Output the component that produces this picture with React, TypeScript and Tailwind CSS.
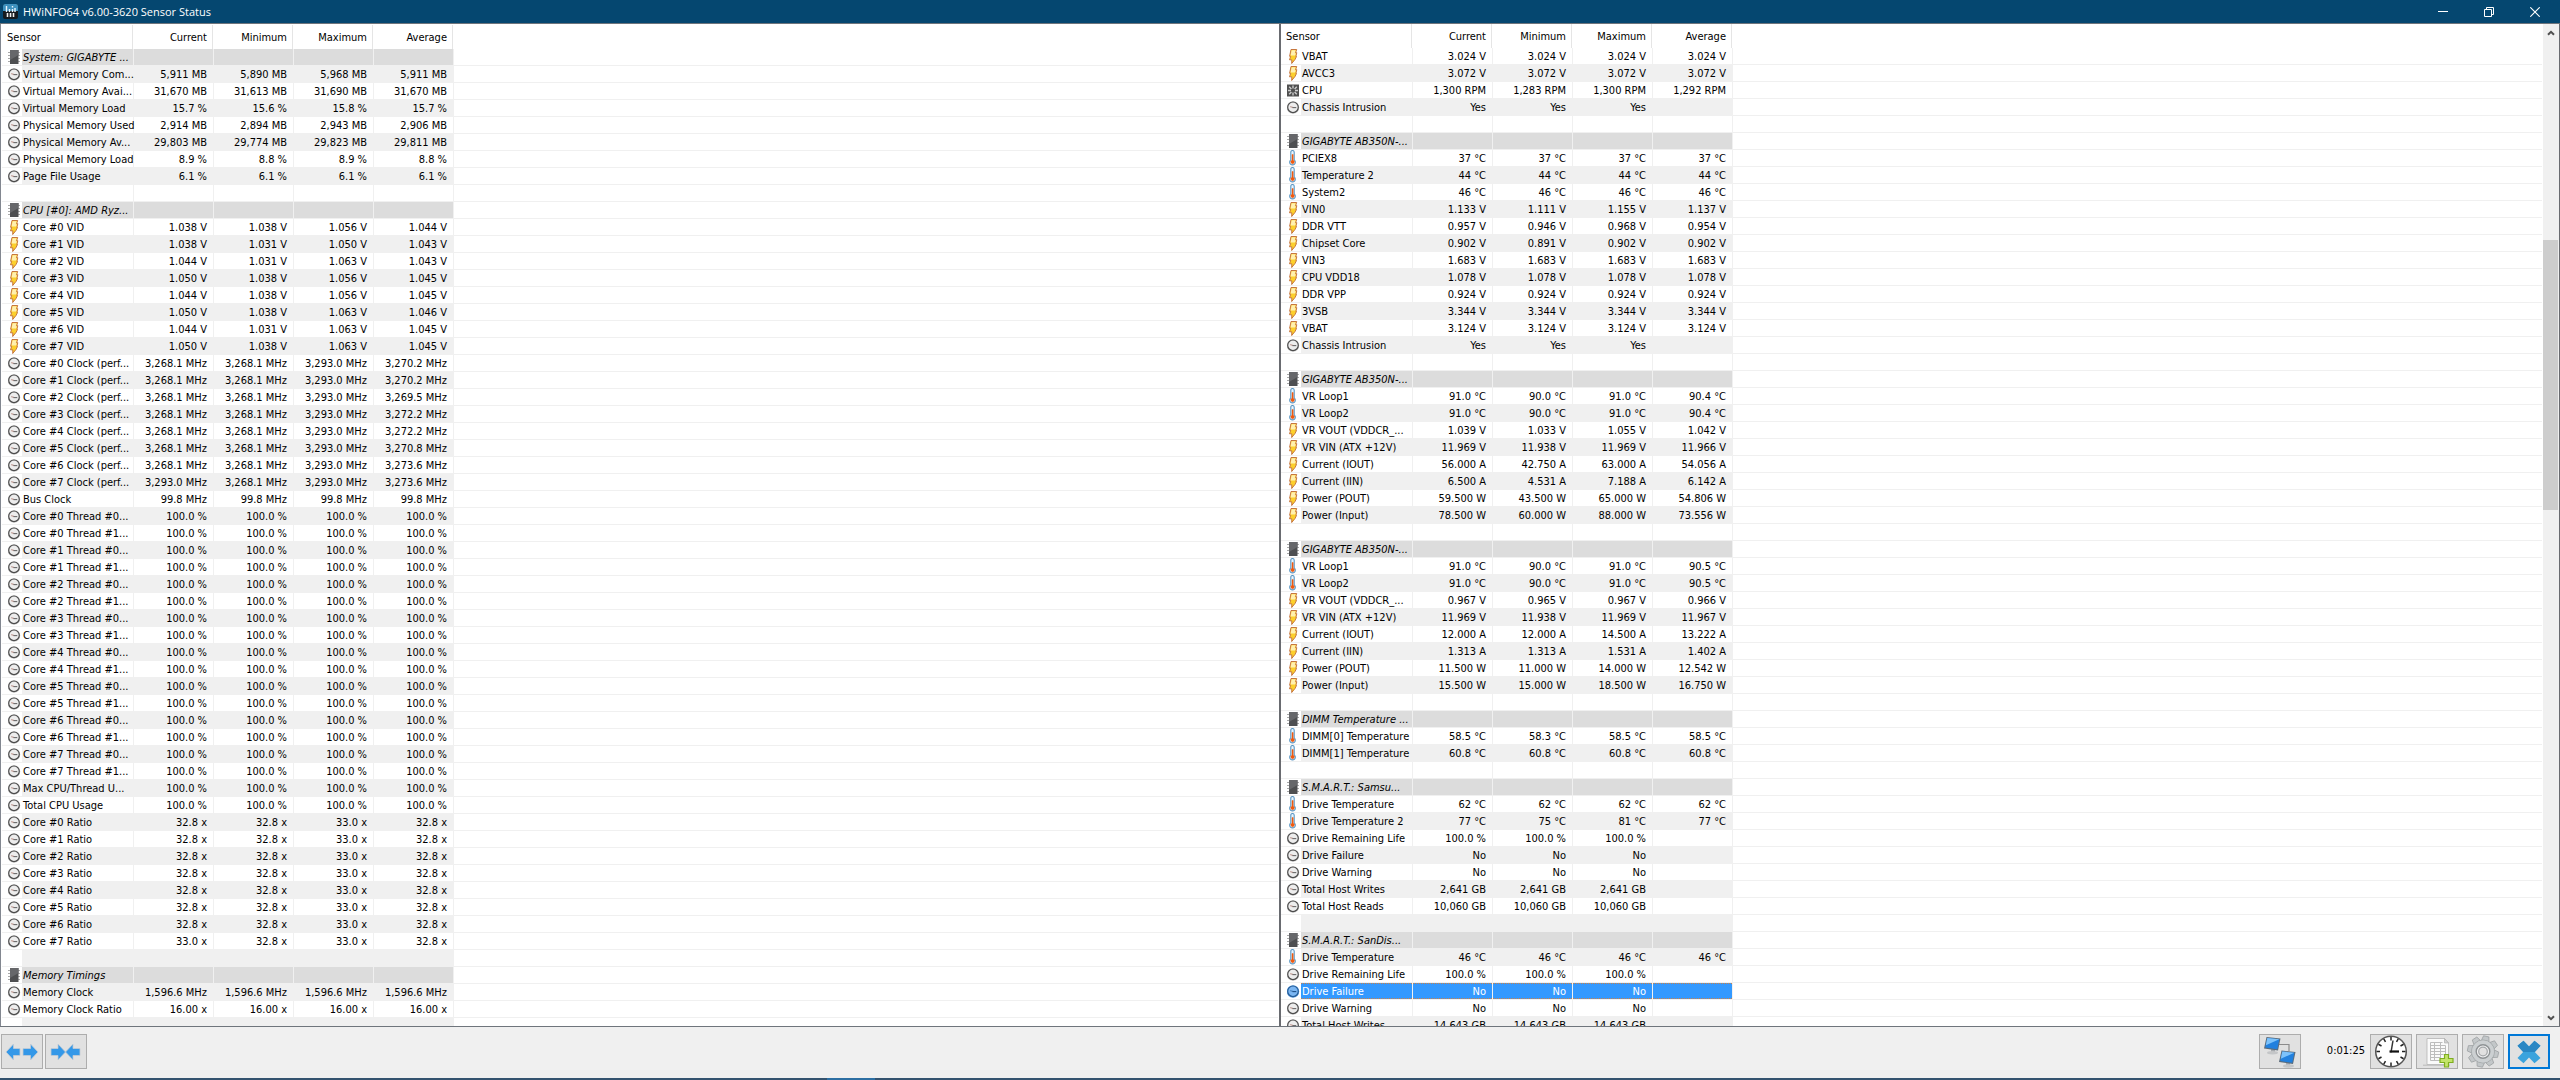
type IconKind = 'chip' | 'gauge' | 'volt' | 'temp' | 'fan';

interface Row {
  icon?: IconKind;
  label: string;
  values: string[];
  group?: boolean;
  selected?: boolean;
}

const same = (value: string, times = 4) => Array<string>(times).fill(value);
const row = (icon: IconKind, label: string, ...values: string[]): Row => ({ icon, label, values });
const group = (label: string): Row => ({ icon: 'chip', label, values: [], group: true });
const blank: Row = { label: '', values: [] };

const coreVids = [
  ['1.038 V', '1.038 V', '1.056 V', '1.044 V'],
  ['1.038 V', '1.031 V', '1.050 V', '1.043 V'],
  ['1.044 V', '1.031 V', '1.063 V', '1.043 V'],
  ['1.050 V', '1.038 V', '1.056 V', '1.045 V'],
  ['1.044 V', '1.038 V', '1.056 V', '1.045 V'],
  ['1.050 V', '1.038 V', '1.063 V', '1.046 V'],
  ['1.044 V', '1.031 V', '1.063 V', '1.045 V'],
  ['1.050 V', '1.038 V', '1.063 V', '1.045 V'],
];

const clockAverages = ['3,270.2', '3,270.2', '3,269.5', '3,272.2', '3,272.2', '3,270.8', '3,273.6', '3,273.6'];

const leftRows: Row[] = [
  group('System: GIGABYTE ...'),
  row('gauge', 'Virtual Memory Com...', '5,911 MB', '5,890 MB', '5,968 MB', '5,911 MB'),
  row('gauge', 'Virtual Memory Avai...', '31,670 MB', '31,613 MB', '31,690 MB', '31,670 MB'),
  row('gauge', 'Virtual Memory Load', '15.7 %', '15.6 %', '15.8 %', '15.7 %'),
  row('gauge', 'Physical Memory Used', '2,914 MB', '2,894 MB', '2,943 MB', '2,906 MB'),
  row('gauge', 'Physical Memory Av...', '29,803 MB', '29,774 MB', '29,823 MB', '29,811 MB'),
  row('gauge', 'Physical Memory Load', '8.9 %', '8.8 %', '8.9 %', '8.8 %'),
  row('gauge', 'Page File Usage', ...same('6.1 %')),
  blank,
  group('CPU [#0]: AMD Ryz...'),
  ...coreVids.map((values, i) => row('volt', `Core #${i} VID`, ...values)),
  ...clockAverages.map((avg, i) =>
    row(
      'gauge',
      `Core #${i} Clock (perf...`,
      i === 7 ? '3,293.0 MHz' : '3,268.1 MHz',
      '3,268.1 MHz',
      '3,293.0 MHz',
      `${avg} MHz`
    )
  ),
  row('gauge', 'Bus Clock', ...same('99.8 MHz')),
  ...Array.from({ length: 16 }, (_, i) =>
    row('gauge', `Core #${Math.floor(i / 2)} Thread #${i % 2}...`, ...same('100.0 %'))
  ),
  row('gauge', 'Max CPU/Thread U...', ...same('100.0 %')),
  row('gauge', 'Total CPU Usage', ...same('100.0 %')),
  ...Array.from({ length: 8 }, (_, i) =>
    row('gauge', `Core #${i} Ratio`, i === 7 ? '33.0 x' : '32.8 x', '32.8 x', '33.0 x', '32.8 x')
  ),
  blank,
  group('Memory Timings'),
  row('gauge', 'Memory Clock', ...same('1,596.6 MHz')),
  row('gauge', 'Memory Clock Ratio', ...same('16.00 x')),
  blank,
];

const rightRows: Row[] = [
  row('volt', 'VBAT', ...same('3.024 V')),
  row('volt', 'AVCC3', ...same('3.072 V')),
  row('fan', 'CPU', '1,300 RPM', '1,283 RPM', '1,300 RPM', '1,292 RPM'),
  row('gauge', 'Chassis Intrusion', ...same('Yes', 3)),
  blank,
  group('GIGABYTE AB350N-...'),
  row('temp', 'PCIEX8', ...same('37 °C')),
  row('temp', 'Temperature 2', ...same('44 °C')),
  row('temp', 'System2', ...same('46 °C')),
  row('volt', 'VIN0', '1.133 V', '1.111 V', '1.155 V', '1.137 V'),
  row('volt', 'DDR VTT', '0.957 V', '0.946 V', '0.968 V', '0.954 V'),
  row('volt', 'Chipset Core', '0.902 V', '0.891 V', '0.902 V', '0.902 V'),
  row('volt', 'VIN3', ...same('1.683 V')),
  row('volt', 'CPU VDD18', ...same('1.078 V')),
  row('volt', 'DDR VPP', ...same('0.924 V')),
  row('volt', '3VSB', ...same('3.344 V')),
  row('volt', 'VBAT', ...same('3.124 V')),
  row('gauge', 'Chassis Intrusion', ...same('Yes', 3)),
  blank,
  group('GIGABYTE AB350N-...'),
  row('temp', 'VR Loop1', '91.0 °C', '90.0 °C', '91.0 °C', '90.4 °C'),
  row('temp', 'VR Loop2', '91.0 °C', '90.0 °C', '91.0 °C', '90.4 °C'),
  row('volt', 'VR VOUT (VDDCR_...', '1.039 V', '1.033 V', '1.055 V', '1.042 V'),
  row('volt', 'VR VIN (ATX +12V)', '11.969 V', '11.938 V', '11.969 V', '11.966 V'),
  row('volt', 'Current (IOUT)', '56.000 A', '42.750 A', '63.000 A', '54.056 A'),
  row('volt', 'Current (IIN)', '6.500 A', '4.531 A', '7.188 A', '6.142 A'),
  row('volt', 'Power (POUT)', '59.500 W', '43.500 W', '65.000 W', '54.806 W'),
  row('volt', 'Power (Input)', '78.500 W', '60.000 W', '88.000 W', '73.556 W'),
  blank,
  group('GIGABYTE AB350N-...'),
  row('temp', 'VR Loop1', '91.0 °C', '90.0 °C', '91.0 °C', '90.5 °C'),
  row('temp', 'VR Loop2', '91.0 °C', '90.0 °C', '91.0 °C', '90.5 °C'),
  row('volt', 'VR VOUT (VDDCR_...', '0.967 V', '0.965 V', '0.967 V', '0.966 V'),
  row('volt', 'VR VIN (ATX +12V)', '11.969 V', '11.938 V', '11.969 V', '11.967 V'),
  row('volt', 'Current (IOUT)', '12.000 A', '12.000 A', '14.500 A', '13.222 A'),
  row('volt', 'Current (IIN)', '1.313 A', '1.313 A', '1.531 A', '1.402 A'),
  row('volt', 'Power (POUT)', '11.500 W', '11.000 W', '14.000 W', '12.542 W'),
  row('volt', 'Power (Input)', '15.500 W', '15.000 W', '18.500 W', '16.750 W'),
  blank,
  group('DIMM Temperature ...'),
  row('temp', 'DIMM[0] Temperature', '58.5 °C', '58.3 °C', '58.5 °C', '58.5 °C'),
  row('temp', 'DIMM[1] Temperature', ...same('60.8 °C')),
  blank,
  group('S.M.A.R.T.: Samsu...'),
  row('temp', 'Drive Temperature', ...same('62 °C')),
  row('temp', 'Drive Temperature 2', '77 °C', '75 °C', '81 °C', '77 °C'),
  row('gauge', 'Drive Remaining Life', ...same('100.0 %', 3)),
  row('gauge', 'Drive Failure', ...same('No', 3)),
  row('gauge', 'Drive Warning', ...same('No', 3)),
  row('gauge', 'Total Host Writes', ...same('2,641 GB', 3)),
  row('gauge', 'Total Host Reads', ...same('10,060 GB', 3)),
  blank,
  group('S.M.A.R.T.: SanDis...'),
  row('temp', 'Drive Temperature', ...same('46 °C')),
  row('gauge', 'Drive Remaining Life', ...same('100.0 %', 3)),
  { ...row('gauge', 'Drive Failure', ...same('No', 3)), selected: true },
  row('gauge', 'Drive Warning', ...same('No', 3)),
  row('gauge', 'Total Host Writes', ...same('14,643 GB', 3)),
];

function SensorIcon({ kind, selected }: { kind: IconKind; selected?: boolean }) {
  return (
    <svg width="13" height="16" viewBox="0 0 13 16" className="block" aria-hidden>
      {kind === 'chip' && (
        <>
          <path d="M0 3.5h12M0 6.5h12M0 9.5h12M0 12.5h12" stroke="#a9a9a9" />
          <path d="M2 1h8.500v14H2z" fill="#4e4f51" />
          <path d="M2 1h8.500v5L2 11z" fill="#66676a" />
        </>
      )}
      {kind === 'gauge' && (
        <>
          <circle cx="6" cy="8.5" r="6.2" fill={selected ? '#5f9fe0' : '#c9c9c9'} />
          <circle
            cx="6"
            cy="8.3"
            r="5.3"
            fill={selected ? '#7bb6f2' : '#ededed'}
            stroke={selected ? '#245c97' : '#4c4c4c'}
            strokeWidth="1.2"
          />
          <path d="M3.200 7.700 6 8.400" stroke={selected ? '#3e78b5' : '#b8887f'} />
          <path d="M5.500 8.600h3.800" stroke={selected ? '#1d4f86' : '#6a6a6a'} strokeWidth="1.1" />
        </>
      )}
      {kind === 'volt' && (
        <>
          <path
            d="M4 1.500h5.700L8.600 4.700h1.200L8.900 8.500h.6L8 11.500l-3.300 4 .1-3.700H2.500L3.700 8.300H2.600z"
            fill="#fcd02c"
            stroke="#bf6a35"
            strokeWidth="0.9"
            strokeLinejoin="round"
          />
          <path d="M4.600 2.200h4L7.700 5.200h1.100L8.200 7.500H3.600z" fill="#fff0b0" />
        </>
      )}
      {kind === 'temp' && (
        <>
          <path
            d="M3.800 2.200a1.700 1.700 0 0 1 3.400 0v7.700a2.800 2.800 0 1 1-3.400 0z"
            fill="#e9f5fe"
            stroke="#5a96c3"
            strokeWidth="1.1"
          />
          <path d="M5 4.500h1.200v5.800a1.700 1.700 0 1 1-1.200 0z" fill="#f05a10" stroke="#f05a10" strokeWidth="0.400" />
        </>
      )}
      {kind === 'fan' && (
        <>
          <path d="M0 2.500h12v12H0z" fill="#505050" />
          <path
            d="M6 3.500v3M6 10.500v3M1 8.500h3M8 8.500h3M2.200 4.700l2.200 2.200M7.600 10.100l2.200 2.200M9.800 4.700 7.600 6.900M4.400 10.100l-2.200 2.200"
            stroke="#cdcdcd"
            strokeWidth="1.4"
          />
        </>
      )}
    </svg>
  );
}

function rowFill(r: Row, index: number) {
  if (r.selected) return 'bg-[#3399ff] text-white';
  if (r.group) return 'bg-[#dcdcdc]';
  return index % 2 ? 'bg-[#f0f0f0]' : '';
}

function SensorTable({ rows }: { rows: Row[] }) {
  return (
    <table className="w-full table-fixed border-separate border-spacing-0 text-[11px] text-black">
      <colgroup>
        <col className="w-5" />
        <col className="w-28" />
        <col className="w-20" />
        <col className="w-20" />
        <col className="w-20" />
        <col className="w-20" />
        <col />
      </colgroup>
      <thead>
        <tr>
          <th colSpan={2} className="p-0 text-left font-normal">
            <div className="mr-px h-6 border-r border-[#e5e5e5] pl-[5px] leading-[26px]">Sensor</div>
          </th>
          {['Current', 'Minimum', 'Maximum', 'Average'].map((title) => (
            <th key={title} className="p-0 text-right font-normal">
              <div className="mr-px h-6 border-r border-[#e5e5e5] pr-[5px] leading-[26px]">{title}</div>
            </th>
          ))}
          <th className="p-0" />
        </tr>
      </thead>
      <tbody>
        {rows.map((r, i) => {
          const fill = rowFill(r, i);
          const focus = r.selected ? 'border-y border-dotted border-[#c9814a] leading-4' : 'leading-[18px]';
          return (
            <tr key={i}>
              <td className="border-b border-[#f0f0f0] p-0 pl-1.5">
                {r.icon && <SensorIcon kind={r.icon} selected={r.selected} />}
              </td>
              <td className={`border-r border-b border-[#f0f0f0] p-0 whitespace-nowrap ${fill}`}>
                <div className={`h-4 pl-px ${focus} ${r.group ? 'italic' : ''}`}>{r.label}</div>
              </td>
              {[0, 1, 2, 3].map((c) => (
                <td key={c} className={`border-r border-b border-[#f0f0f0] p-0 text-right whitespace-nowrap ${fill}`}>
                  <div className={`h-4 pr-1.5 ${focus}`}>{r.values[c]}</div>
                </td>
              ))}
              <td className="border-b border-[#f0f0f0] p-0" />
            </tr>
          );
        })}
      </tbody>
    </table>
  );
}

function TitleBar() {
  return (
    <header className="flex h-[23px] shrink-0 items-center bg-[#054770] pr-0.5 pl-[3px] text-white">
      <svg width="15" height="15" viewBox="0 0 15 15" aria-hidden>
        <rect width="15" height="15" rx="2" fill="#15191d" />
        <path d="M0 2a2 2 0 0 1 2-2h11a2 2 0 0 1 2 2v5H0z" fill="#3d91bf" />
        <path d="M3.5 2v6M6.5 5v3M9.5 2v1.4M9.5 5v3M12 4v4" stroke="#e8f6ff" strokeWidth="1.4" />
        <path d="M4.5 9v4M7.5 9v4M10.5 9v4" stroke="#f2f2f2" strokeWidth="1.6" />
      </svg>
      <h1 className="ml-[5px] pt-px font-['Open_Sans',sans-serif] text-[11px]">HWiNFO64 v6.00-3620 Sensor Status</h1>
      <div className="ml-auto flex h-full">
        <button type="button" aria-label="Minimize" className="flex w-[46px] items-center justify-center">
          <svg width="10" height="10" viewBox="0 0 10 10">
            <path d="M0 4.5h10" stroke="#fff" />
          </svg>
        </button>
        <button type="button" aria-label="Restore" className="flex w-[46px] items-center justify-center">
          <svg width="10" height="10" viewBox="0 0 10 10" fill="none" stroke="#fff">
            <path d="M.5 2.5h7v7h-7zM2.5 2.5v-2h7v7h-2" />
          </svg>
        </button>
        <button type="button" aria-label="Close" className="flex w-[46px] items-center justify-center">
          <svg width="10" height="10" viewBox="0 0 10 10">
            <path d="M.3.3l9.4 9.4M9.7.3.3 9.7" stroke="#fff" strokeWidth="1.1" />
          </svg>
        </button>
      </div>
    </header>
  );
}

function ScrollBar() {
  return (
    <div className="flex w-4 shrink-0 flex-col bg-[#f0f0f0]">
      <button type="button" aria-label="Scroll up" className="flex h-[17px] items-center justify-center">
        <svg width="8" height="6" viewBox="0 0 8 6">
          <path d="M1 4.8 4 1.8l3 3" fill="none" stroke="#505050" strokeWidth="2" />
        </svg>
      </button>
      <div className="flex-[199]" />
      <div className="mr-px flex-[270] bg-[#cdcdcd]" />
      <div className="flex-[499]" />
      <button type="button" aria-label="Scroll down" className="flex h-[17px] items-center justify-center">
        <svg width="8" height="6" viewBox="0 0 8 6">
          <path d="M1 1.2l3 3 3-3" fill="none" stroke="#505050" strokeWidth="2" />
        </svg>
      </button>
    </div>
  );
}

function ToolButton({ label, active, children }: { label: string; active?: boolean; children: React.ReactNode }) {
  return (
    <button
      type="button"
      aria-label={label}
      className={`flex h-[35px] w-[42px] items-center justify-center bg-[#e1e1e1] ${
        active ? 'border-2 border-[#0078d7]' : 'border border-[#adadad]'
      }`}
    >
      {children}
    </button>
  );
}

function BottomBar() {
  return (
    <footer className="flex h-[51px] shrink-0 bg-[#f0f0f0] pt-[7px] pr-2.5 pl-px">
      <div className="flex gap-0.5">
        <ToolButton label="Expand columns">
          <svg width="34" height="20" viewBox="0 0 34 20" fill="#3498e8" stroke="#c3ccd4" strokeWidth="0.8">
            <path d="M1 10 8.500 2v4.500H15v7H8.500V18z" />
            <path d="M33 10 25.500 2v4.500H18v7h7.500V18z" />
          </svg>
        </ToolButton>
        <ToolButton label="Shrink columns">
          <svg width="34" height="20" viewBox="0 0 34 20" fill="#3498e8" stroke="#c3ccd4" strokeWidth="0.8">
            <path d="M16.500 10 9 2v4.500H2v7h7V18z" />
            <path d="M16.500 10 24 2v4.500h7v7h-7V18z" />
          </svg>
        </ToolButton>
      </div>
      <div className="ml-auto flex gap-1">
        <ToolButton label="Remote monitoring">
          <svg width="34" height="32" viewBox="0 0 34 32">
            <path d="M16 8.500h10V15" fill="none" stroke="#8c8c8c" strokeWidth="1.2" />
            <path d="M8 13h4v3H8z" fill="#a5a9ad" />
            <ellipse cx="9.500" cy="16.800" rx="5.500" ry="1.700" fill="#c4c6c8" />
            <path d="M3.500 1l14 1.500L15 14.500 1 12.500z" fill="#5b6b7a" />
            <path d="M4.300 2l12 1.300-2 10L2.200 11.600z" fill="#2180de" />
            <path d="M4.300 2l12 1.300L2.800 9.300z" fill="#7cc2fb" />
            <path d="M23 26h4v3h-4z" fill="#a5a9ad" />
            <ellipse cx="25.500" cy="30" rx="5.500" ry="1.700" fill="#c4c6c8" />
            <path d="M18.500 14.500l14 1.500L30 28l-14-2z" fill="#5b6b7a" />
            <path d="M19.300 15.500l12 1.300-2 10-12.100-1.700z" fill="#2180de" />
            <path d="M19.300 15.500l12 1.300-13.500 6z" fill="#7cc2fb" />
          </svg>
        </ToolButton>
        <span className="w-[61px] pr-px text-right text-[11px] leading-[33px] text-black">0:01:25</span>
        <ToolButton label="Reset clock">
          <svg width="34" height="33" viewBox="-17 -16.500 34 33">
            <circle r="15.300" fill="#fff" stroke="#555" strokeWidth="1.500" />
            {Array.from({ length: 12 }, (_, i) => (
              <path key={i} d="M0-14.500V-11" stroke="#222" strokeWidth="1.500" transform={`rotate(${i * 30})`} />
            ))}
            <path d="M0 1 2-11" stroke="#333" strokeWidth="1.500" />
            <path d="M-1.500 0H8" stroke="#111" strokeWidth="2.200" />
          </svg>
        </ToolButton>
        <ToolButton label="Start logging">
          <svg width="34" height="32" viewBox="0 0 34 32">
            <path d="M3 28.500h27v1.500H3z" fill="#c6c6c6" />
            <path d="M7 2.500h17.500l4 4.500v21.500H7z" fill="#fafafa" stroke="#b4b4b4" strokeWidth="0.8" />
            <path d="M24.500 2.500V7h4z" fill="#d2d2d2" stroke="#a8a8a8" strokeWidth="0.6" />
            <path
              d="M10.500 6.500h12M10.500 9.500h15M10.500 12.500h15M10.500 15.500h15M10.500 18.500h13M10.500 21.500h10M10.500 24.500h10M10.500 6.500v18M14.500 6.500v18M20.500 6.500v18M25.500 9.500v9"
              fill="none"
              stroke="#bdbdbd"
              strokeWidth="1"
            />
            <path
              d="M24.500 18.500h4v4H33v4h-4.500v4.500h-4v-4.500H20v-4h4.500z"
              fill="#c3e46a"
              stroke="#7fae20"
              strokeWidth="1.200"
            />
          </svg>
        </ToolButton>
        <ToolButton label="Settings">
          <svg width="34" height="33" viewBox="-17 -16.500 34 33">
            <g fill="#c3c7c9" stroke="#999d9f" strokeWidth="0.700">
              {Array.from({ length: 8 }, (_, i) => (
                <path key={i} d="M-4-10-2.700-15.500h5.400L4-10z" transform={`rotate(${i * 45 + 12})`} />
              ))}
              <circle r="11.500" />
            </g>
            <circle r="10.900" fill="#ccd0d2" />
            <circle r="6.800" fill="#f0f1f2" stroke="#8e9294" strokeWidth="1.400" />
            <circle r="4.300" fill="#e1e1e1" stroke="#a4a7a9" strokeWidth="1.200" />
          </svg>
        </ToolButton>
        <ToolButton label="Close sensors" active>
          <svg width="26" height="24" viewBox="0 0 26 24">
            <path
              d="M7.500.8 13 6.400 18.500.8 24.500 5.800 18.800 12l5.700 6-6 5.200-5.500-5.600-5.500 5.600-6-5.200L7.200 12 1.500 5.800z"
              fill="#3ba3dd"
            />
            <path d="M7.500.8 13 6.400 18.500.8 24.500 5.800 18.800 12H7.200L1.500 5.800z" fill="#2a87c4" />
          </svg>
        </ToolButton>
      </div>
    </footer>
  );
}

export default function App() {
  return (
    <div className="flex h-screen flex-col overflow-hidden bg-white font-['DejaVu_Sans_Condensed','DejaVu_Sans',sans-serif]">
      <TitleBar />
      <main className="flex min-h-0 flex-1 border-t border-b border-[#6f757c]">
        <section className="w-[calc(50%-1px)] overflow-hidden border-l border-[#828790] px-px pt-px">
          <SensorTable rows={leftRows} />
        </section>
        <section className="flex min-w-0 flex-1 overflow-hidden border-r border-l-2 border-[#696b70]">
          <div className="mr-px min-w-0 flex-1">
            <SensorTable rows={rightRows} />
          </div>
          <ScrollBar />
        </section>
      </main>
      <BottomBar />
      {/* sliver of the desktop taskbar */}
      <div className="flex h-0.5 shrink-0 bg-[#34536f]">
        <div className="ml-[32.3%] w-12 bg-[#2d6fa3]" />
      </div>
    </div>
  );
}
